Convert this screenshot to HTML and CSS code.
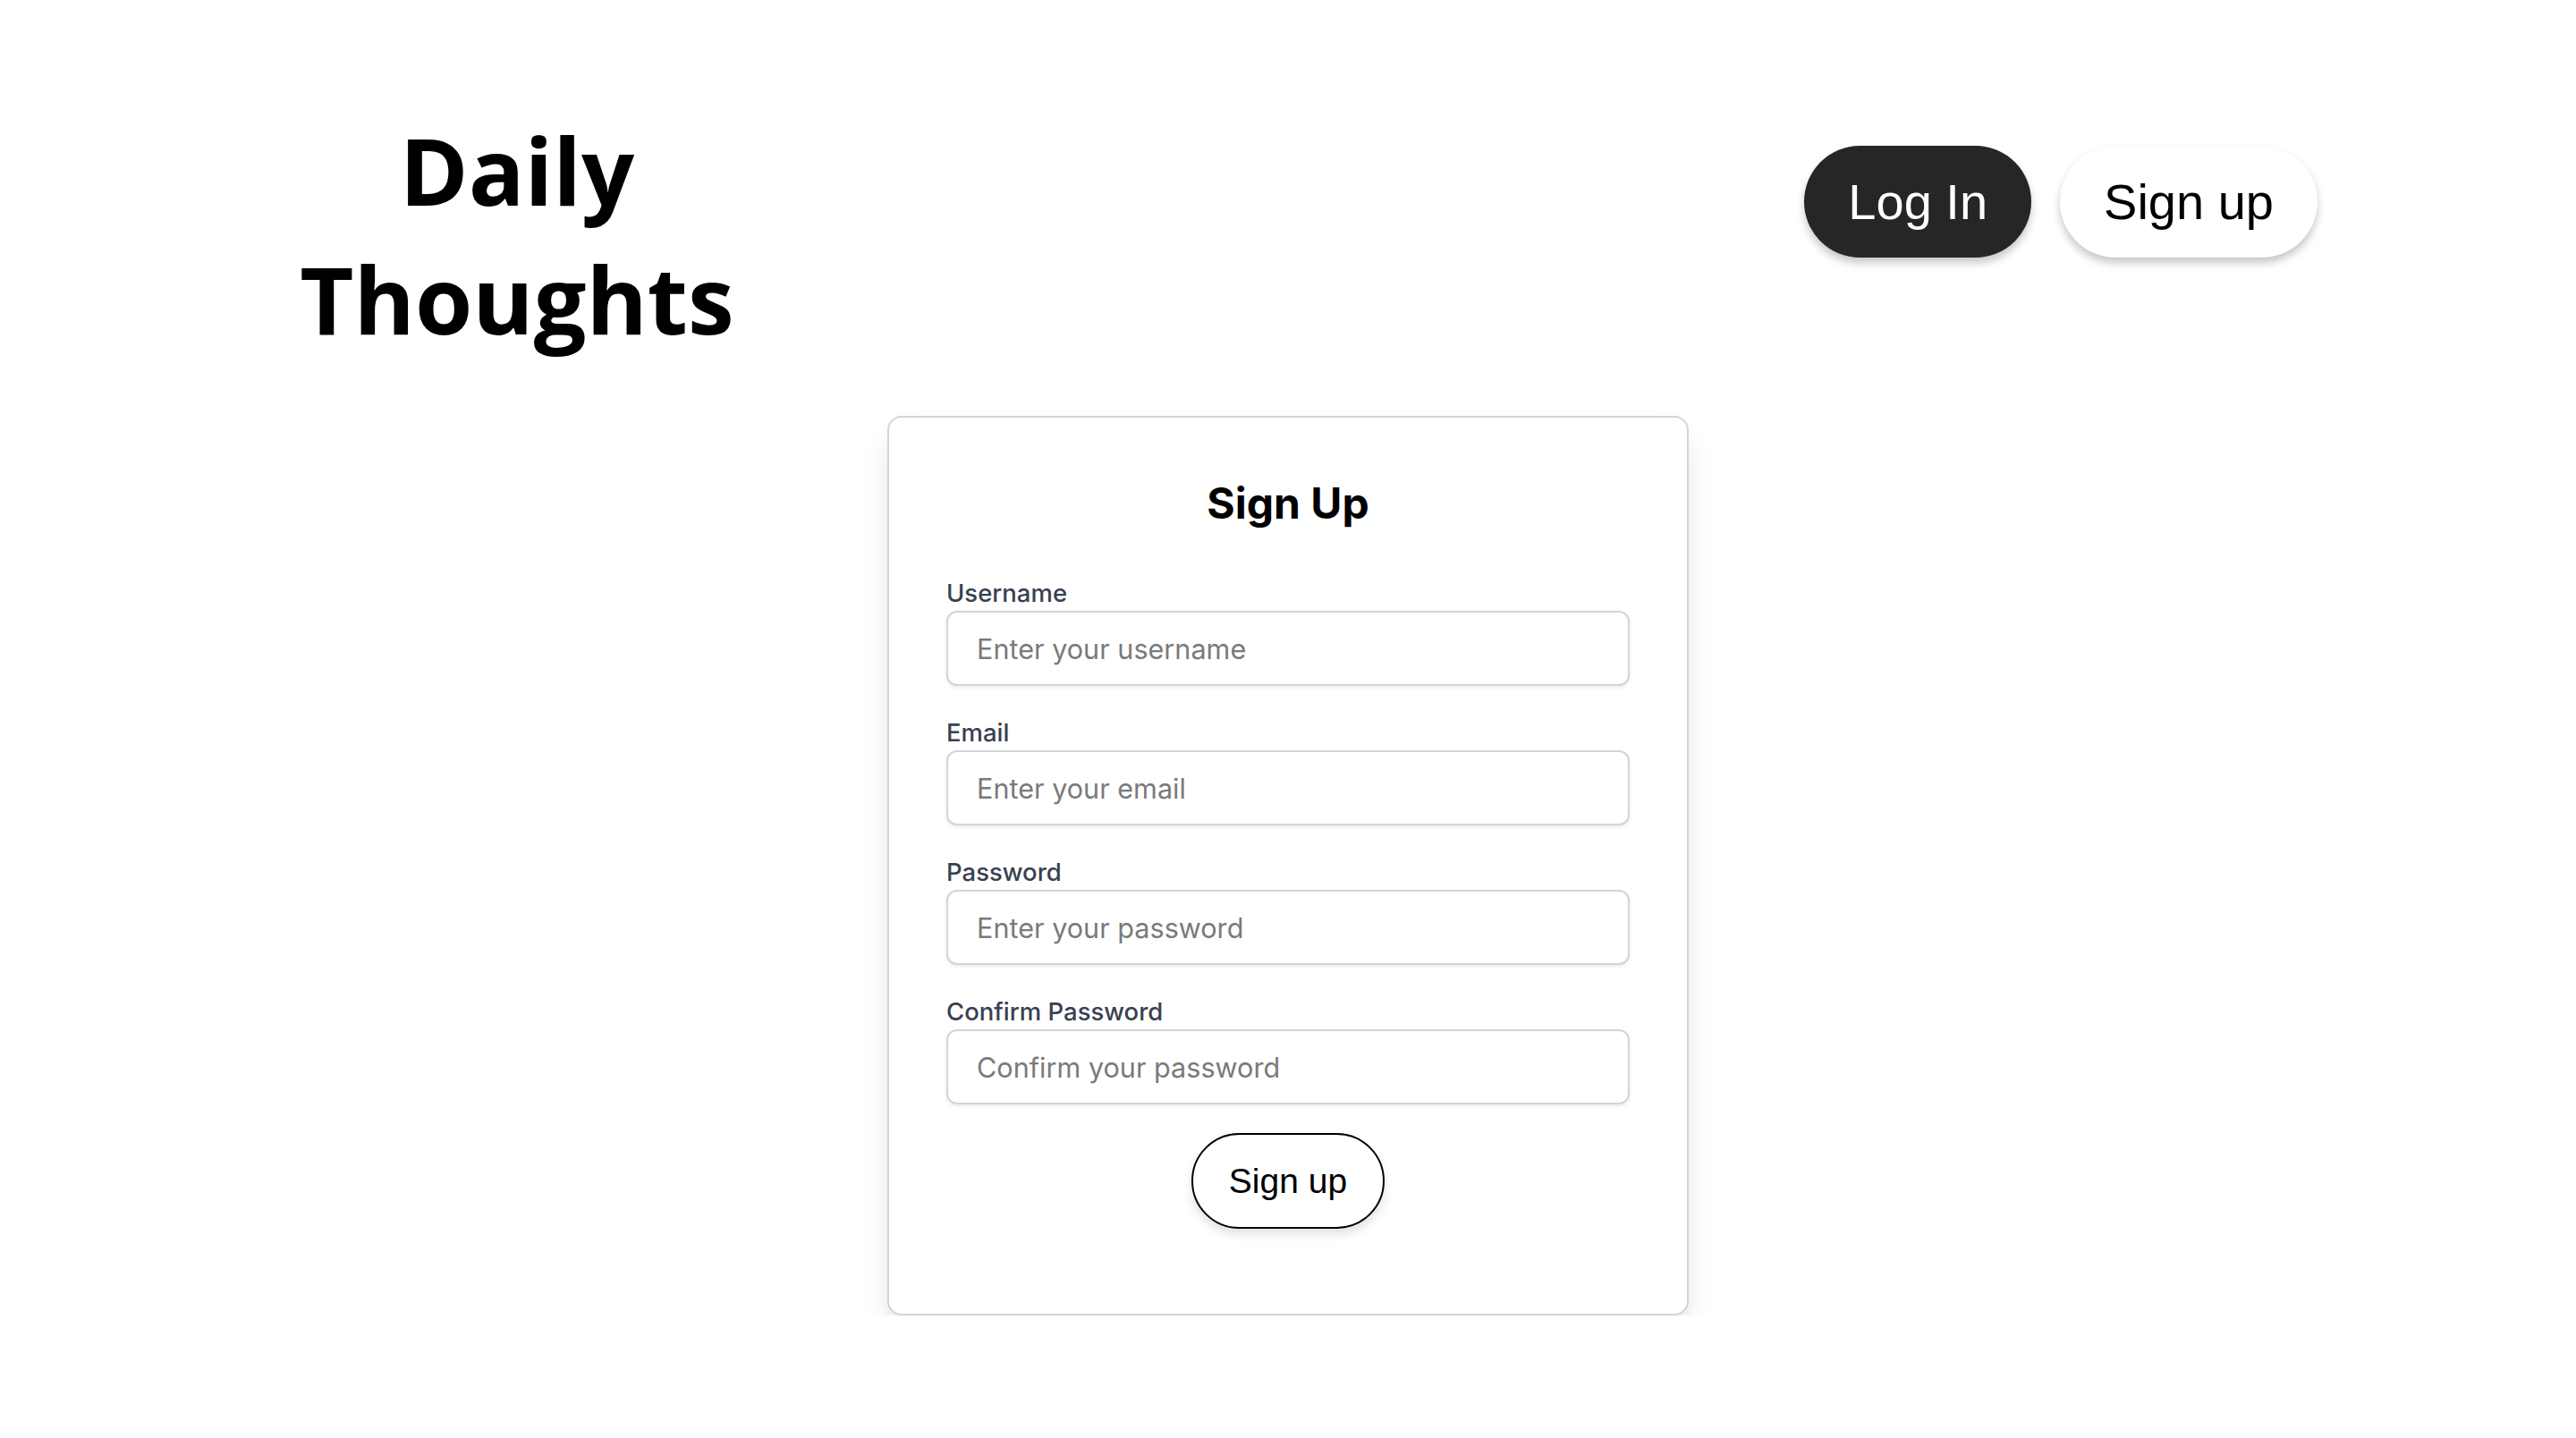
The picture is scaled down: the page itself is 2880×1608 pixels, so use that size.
FILE: index.html
```html
<!DOCTYPE html>
<html lang="en">
<head>
<meta charset="utf-8">
<title>Daily Thoughts - Sign Up</title>
<link rel="stylesheet" href="styles.css">
</head>
<body>
<header class="site-header">
  <h1 class="brand">Daily<br>Thoughts</h1>
  <nav class="nav">
    <button class="nav-btn nav-btn-dark" type="button">Log In</button>
    <button class="nav-btn nav-btn-light" type="button">Sign up</button>
  </nav>
</header>
<main class="main">
  <form class="card">
    <h2 class="card-title">Sign Up</h2>
    <div class="field">
      <label class="label" for="username">Username</label>
      <input class="input" id="username" type="text" placeholder="Enter your username">
    </div>
    <div class="field">
      <label class="label" for="email">Email</label>
      <input class="input" id="email" type="email" placeholder="Enter your email">
    </div>
    <div class="field">
      <label class="label" for="password">Password</label>
      <input class="input" id="password" type="password" placeholder="Enter your password">
    </div>
    <div class="field">
      <label class="label" for="confirm">Confirm Password</label>
      <input class="input" id="confirm" type="password" placeholder="Confirm your password">
    </div>
    <div class="actions">
      <button class="submit-btn" type="button">Sign up</button>
    </div>
  </form>
</main>
</body>
</html>
```
FILE: styles.css
```css
* { box-sizing: border-box; }
html, body { margin: 0; padding: 0; background: #ffffff; }
body { font-family: Inter, "Liberation Sans", sans-serif; color: #000; }

.site-header {
  display: flex;
  justify-content: space-between;
  align-items: flex-start;
  padding: 118px 289px 0 278px;
}
.brand {
  width: 600px;
  margin: 0;
  text-align: center;
  font-family: "Open Sans", "Liberation Sans", sans-serif;
  font-weight: 700;
  font-size: 104px;
  line-height: 144px;
  letter-spacing: 0;
  color: #000;
}
.nav {
  display: flex;
  gap: 32px;
  margin-top: 45px;
}
.nav-btn {
  height: 125px;
  padding: 0 49px;
  border: none;
  border-radius: 999px;
  font-family: "Liberation Sans", Arial, sans-serif;
  font-size: 56px;
  box-shadow: 0 6px 10px rgba(0, 0, 0, 0.22);
  cursor: pointer;
}
.nav-btn-dark { background: #262626; color: #fff; }
.nav-btn-light { background: #fff; color: #000; }

.main {
  display: flex;
  justify-content: center;
  padding-top: 59px;
}
.card {
  width: 896px;
  border: 2px solid #d1d5db;
  border-radius: 16px;
  background: #fff;
  padding: 64px 64px 95px;
  box-shadow: 0 20px 40px -10px rgba(0, 0, 0, 0.14), 0 6px 14px -4px rgba(0, 0, 0, 0.06);
}
.card-title {
  margin: 0 0 48px;
  text-align: center;
  font-family: Inter, sans-serif;
  font-weight: 700;
  font-size: 48px;
  line-height: 64px;
}
.field {
  display: flex;
  flex-direction: column;
  margin-bottom: 32px;
}
.label {
  font-family: Inter, sans-serif;
  font-weight: 500;
  font-size: 27.5px;
  line-height: 40px;
  color: #374151;
}
.input {
  width: 100%;
  height: 84px;
  padding: 16px 32px;
  border: 2px solid #d1d5db;
  border-radius: 12px;
  font-family: Inter, sans-serif;
  font-size: 30.6px;
  line-height: 48px;
  color: #111;
  background: #fff;
  box-shadow: 0 2px 4px rgba(0, 0, 0, 0.08);
  outline: none;
}
.input::placeholder { color: #7a7a7a; }
.actions {
  display: flex;
  justify-content: center;
}
.submit-btn {
  height: 107px;
  padding: 0 40px;
  border: 2px solid #000;
  border-radius: 999px;
  background: #fff;
  color: #000;
  font-family: "Liberation Sans", Arial, sans-serif;
  font-size: 39px;
  box-shadow: 0 6px 12px rgba(0, 0, 0, 0.12);
  cursor: pointer;
}
```
